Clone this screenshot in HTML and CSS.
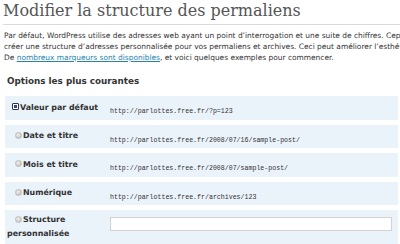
FILE: index.html
```html
<!DOCTYPE html>
<html lang="fr">
<head>
<meta charset="utf-8">
<title>Permaliens</title>
<link rel="stylesheet" href="styles.css">
</head>
<body>
<div class="wrap">
  <h2 class="title">Modifier la structure des permaliens</h2>
  <p class="intro">Par défaut, WordPress utilise des adresses web ayant un point d’interrogation et une suite de chiffres. Cependant, WordPress vous permet de<br>créer une structure d’adresses personnalisée pour vos permaliens et archives. Ceci peut améliorer l’esthétique, l’utilisabilité et la pérennité de vos liens.<br>De <a href="#" class="link">nombreux marqueurs sont disponibles</a>, et voici quelques exemples pour commencer.</p>
  <h3 class="subtitle">Options les plus courantes</h3>
  <table class="form-table">
    <tr>
      <th class="label"><span class="radio checked"></span>Valeur par défaut</th>
      <td class="value"><code class="url">http://parlottes.free.fr/?p=123</code></td>
    </tr>
    <tr>
      <th class="label"><span class="radio"></span>Date et titre</th>
      <td class="value"><code class="url">http://parlottes.free.fr/2008/07/16/sample-post/</code></td>
    </tr>
    <tr>
      <th class="label"><span class="radio"></span>Mois et titre</th>
      <td class="value"><code class="url">http://parlottes.free.fr/2008/07/sample-post/</code></td>
    </tr>
    <tr>
      <th class="label"><span class="radio"></span>Numérique</th>
      <td class="value"><code class="url">http://parlottes.free.fr/archives/123</code></td>
    </tr>
    <tr class="custom">
      <th class="label"><span class="radio"></span>Structure<br>personnalisée</th>
      <td class="value"><span class="input"></span></td>
    </tr>
  </table>
</div>
</body>
</html>
```
FILE: styles.css
```css
html { overflow: hidden; }
body {
  margin: 0;
  background: #fff;
  width: 640px;
  font-family: "DejaVu Sans", Verdana, sans-serif;
  color: #333;
}
.wrap {
  padding: 0 0 0 3px;
}
.title {
  margin: 0;
  padding: 1px 0 3px 0;
  font-family: "DejaVu Serif", Georgia, serif;
  font-weight: normal;
  font-size: 16px;
  line-height: 20px;
  color: #555;
  border-bottom: 1px solid #dadada;
  width: 620px;
}
.intro {
  margin: 5px 0 0 1px;
  font-size: 7.45px;
  line-height: 11px;
  white-space: nowrap;
  color: #333;
}
.link {
  color: #2583ad;
  text-decoration: underline;
}
.subtitle {
  margin: 12px 0 0 4px;
  font-size: 8.8px;
  line-height: 13px;
  font-weight: bold;
  color: #333;
}
.form-table {
  margin: 3px 0 0 2px;
  width: 393px;
  border-collapse: separate;
  border-spacing: 0 5px;
}
.form-table tr { background: #eaf2fa; }
.label {
  width: 98px;
  height: 23.5px;
  padding: 0 0 0 2px;
  text-align: left;
  vertical-align: middle;
  font-size: 7.9px;
  font-weight: bold;
  line-height: 14px;
  color: #333;
  white-space: nowrap;
}
.value {
  padding: 0 6px 0 5px;
  vertical-align: middle;
}
.url {
  font-family: "Liberation Mono", "Courier New", monospace;
  font-size: 6.6px;
  color: #333;
}
.radio {
  display: inline-block;
  box-sizing: border-box;
  width: 7px;
  height: 7px;
  margin: 0 1px 0 8px;
  vertical-align: -0.5px;
  border-radius: 50%;
  background: radial-gradient(circle at 40% 35%, #f0f0f0, #b8b8b8);
  border: 1px solid #bdbdbd;
}
.radio.checked {
  margin: 0 1px 0 5px;
  border-radius: 1px;
  border: 1px solid #2a3550;
  background: #fff;
  position: relative;
}
.radio.checked::after {
  content: "";
  position: absolute;
  left: 1px;
  top: 1px;
  width: 3px;
  height: 3px;
  background: #3a4a70;
}
.custom .label {
  vertical-align: top;
  height: 28px;
  padding-top: 3px;
  padding-bottom: 3px;
}
.custom .value { vertical-align: top; }
.input {
  display: block;
  box-sizing: border-box;
  height: 14px;
  margin-top: 7px;
  background: #fff;
  border: 1px solid #d2d2d2;
}
```
